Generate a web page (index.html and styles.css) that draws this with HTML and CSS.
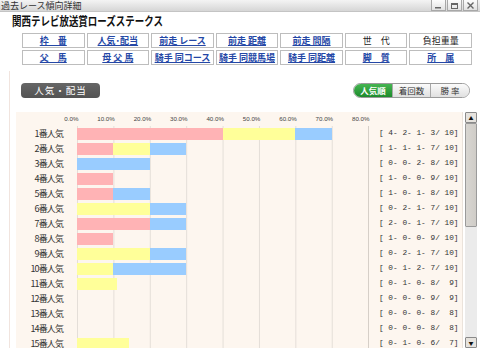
FILE: index.html
```html
<!DOCTYPE html>
<html lang="ja">
<head>
<meta charset="utf-8">
<title>過去レース傾向詳細</title>
<link rel="stylesheet" href="styles.css">
</head>
<body>
<div class="titlebar">
  <span class="tb-title">過去レース傾向詳細</span>
  <div class="tb-btns">
    <span class="tb-btn"><svg width="9" height="7" viewBox="0 0 9 7"><rect x="1" y="5" width="6" height="1.5" fill="#666"/></svg></span>
    <span class="tb-btn"><svg width="9" height="7" viewBox="0 0 9 7"><rect x="1.5" y="1.5" width="6" height="5" fill="none" stroke="#666"/><rect x="1.5" y="1.5" width="6" height="1.5" fill="#666"/></svg></span>
    <span class="tb-btn"><svg width="9" height="7" viewBox="0 0 9 7"><path d="M1.5 0.5 L7.5 6.5 M7.5 0.5 L1.5 6.5" stroke="#666" stroke-width="1.4"/></svg></span>
  </div>
</div>
<div class="race"><span class="race-name">関西テレビ放送賞ローズステークス</span></div>
<div class="nav">
  <a class="cell link">枠　番</a>
  <a class="cell link">人気･配当</a>
  <a class="cell link">前走 レース</a>
  <a class="cell link">前走 距離</a>
  <a class="cell link">前走 間隔</a>
  <span class="cell plain">世　代</span>
  <span class="cell plain">負担重量</span>
  <a class="cell link">父　馬</a>
  <a class="cell link">母 父 馬</a>
  <a class="cell link">騎手 同コース</a>
  <a class="cell link">騎手 同競馬場</a>
  <a class="cell link">騎手 同距離</a>
  <a class="cell link">脚　質</a>
  <a class="cell link">所　属</a>
</div>
<div class="main">
  <div class="section-head">
    <div class="pill">人気・配当</div>
    <div class="toggle">
      <span class="seg on">人気順</span>
      <span class="seg">着回数</span>
      <span class="seg">勝 率</span>
    </div>
  </div>
  <div class="chart-block">
    <div class="chart">
      <div class="axis">
        <span>0.0%</span><span>10.0%</span><span>20.0%</span><span>30.0%</span><span>40.0%</span><span>50.0%</span><span>60.0%</span><span>70.0%</span><span>80.0%</span>
      </div>
      <div class="row"><span class="lbl">1番人気</span><div class="plot"><div class="bar"><i class="p" style="width:50%"></i><i class="y" style="width:25%"></i><i class="b" style="width:12.5%"></i></div></div><span class="st">[ 4- 2- 1- 3/ 10]</span></div>
      <div class="row"><span class="lbl">2番人気</span><div class="plot"><div class="bar"><i class="p" style="width:12.5%"></i><i class="y" style="width:12.5%"></i><i class="b" style="width:12.5%"></i></div></div><span class="st">[ 1- 1- 1- 7/ 10]</span></div>
      <div class="row"><span class="lbl">3番人気</span><div class="plot"><div class="bar"><i class="b" style="width:25%"></i></div></div><span class="st">[ 0- 0- 2- 8/ 10]</span></div>
      <div class="row"><span class="lbl">4番人気</span><div class="plot"><div class="bar"><i class="p" style="width:12.5%"></i></div></div><span class="st">[ 1- 0- 0- 9/ 10]</span></div>
      <div class="row"><span class="lbl">5番人気</span><div class="plot"><div class="bar"><i class="p" style="width:12.5%"></i><i class="b" style="width:12.5%"></i></div></div><span class="st">[ 1- 0- 1- 8/ 10]</span></div>
      <div class="row"><span class="lbl">6番人気</span><div class="plot"><div class="bar"><i class="y" style="width:25%"></i><i class="b" style="width:12.5%"></i></div></div><span class="st">[ 0- 2- 1- 7/ 10]</span></div>
      <div class="row"><span class="lbl">7番人気</span><div class="plot"><div class="bar"><i class="p" style="width:25%"></i><i class="b" style="width:12.5%"></i></div></div><span class="st">[ 2- 0- 1- 7/ 10]</span></div>
      <div class="row"><span class="lbl">8番人気</span><div class="plot"><div class="bar"><i class="p" style="width:12.5%"></i></div></div><span class="st">[ 1- 0- 0- 9/ 10]</span></div>
      <div class="row"><span class="lbl">9番人気</span><div class="plot"><div class="bar"><i class="y" style="width:25%"></i><i class="b" style="width:12.5%"></i></div></div><span class="st">[ 0- 2- 1- 7/ 10]</span></div>
      <div class="row"><span class="lbl">10番人気</span><div class="plot"><div class="bar"><i class="y" style="width:12.5%"></i><i class="b" style="width:25%"></i></div></div><span class="st">[ 0- 1- 2- 7/ 10]</span></div>
      <div class="row"><span class="lbl">11番人気</span><div class="plot"><div class="bar"><i class="y" style="width:13.89%"></i></div></div><span class="st">[ 0- 1- 0- 8/  9]</span></div>
      <div class="row"><span class="lbl">12番人気</span><div class="plot"><div class="bar"></div></div><span class="st">[ 0- 0- 0- 9/  9]</span></div>
      <div class="row"><span class="lbl">13番人気</span><div class="plot"><div class="bar"></div></div><span class="st">[ 0- 0- 0- 8/  8]</span></div>
      <div class="row"><span class="lbl">14番人気</span><div class="plot"><div class="bar"></div></div><span class="st">[ 0- 0- 0- 8/  8]</span></div>
      <div class="row"><span class="lbl">15番人気</span><div class="plot"><div class="bar"><i class="y" style="width:17.86%"></i></div></div><span class="st">[ 0- 1- 0- 6/  7]</span></div>
    </div>
    <div class="scrollbar">
      <span class="sb-btn">▲</span>
      <span class="sb-thumb"></span>
      <span class="sb-track"></span>
      <span class="sb-btn">▼</span>
    </div>
  </div>
</div>
</body>
</html>
```
FILE: styles.css
```css
* { box-sizing: border-box; }
html, body { margin: 0; padding: 0; }
body {
  width: 480px;
  height: 349px;
  overflow: hidden;
  background: #fff;
  font-family: "Noto Sans CJK JP", "Noto Sans", sans-serif;
  color: #222;
}
.titlebar {
  height: 12px;
  display: flex;
  justify-content: space-between;
  align-items: flex-start;
  background: linear-gradient(#f4f4f4, #d6d6d6);
  border-bottom: 1px solid #c4c4c4;
}
.tb-title {
  font-size: 9px;
  line-height: 11px;
  padding-left: 1px;
  color: #333;
}
.tb-btns {
  display: flex;
  gap: 1px;
  padding-right: 2px;
}
.tb-btn {
  width: 15px;
  height: 11px;
  display: flex;
  align-items: center;
  justify-content: center;
  background: linear-gradient(#fdfdfd, #e2e2e2);
  border: 1px solid #a8a8a8;
  border-top: none;
}
.race {
  height: 15px;
  padding-left: 12px;
  line-height: 15px;
}
.race-name {
  display: inline-block;
  font-size: 12px;
  font-weight: bold;
  color: #111;
  transform: scaleX(0.79);
  transform-origin: left center;
  white-space: nowrap;
}
.nav {
  margin: 6px 0 0 22px;
  width: 450px;
  display: grid;
  grid-template-columns: repeat(7, 1fr);
  grid-auto-rows: 15px;
  gap: 2px 2px;
}
.cell {
  border: 1px solid #bdbdbd;
  background: #fff;
  font-size: 9px;
  line-height: 13px;
  text-align: center;
  white-space: nowrap;
}
.link {
  color: #2447a6;
  font-weight: bold;
  text-decoration: underline;
  text-underline-offset: 1px;
}
.plain {
  color: #222;
}
.main {
  margin: 6px 0 0 9px;
  border-left: 1px solid #f1e4de;
  padding-top: 12px;
}
.section-head {
  display: flex;
  justify-content: space-between;
  align-items: center;
  height: 15px;
  padding: 0 10px 0 11px;
}
.pill {
  width: 79px;
  height: 15px;
  border-radius: 4px;
  background: linear-gradient(#666, #535353);
  color: #fff;
  font-size: 9.5px;
  line-height: 15px;
  text-align: center;
  letter-spacing: 1px;
}
.toggle {
  display: flex;
  height: 15px;
  border: 1px solid #9a9a9a;
  border-radius: 8px;
  overflow: hidden;
}
.seg {
  height: 13px;
  font-size: 8.5px;
  line-height: 13px;
  text-align: center;
  color: #333;
  background: linear-gradient(#fbfbfb, #e0e0e0);
  border-left: 1px solid #a8a8a8;
  width: 38px;
}
.seg:last-child { width: 39px; }
.seg.on {
  border-left: none;
  width: 38px;
  background: linear-gradient(#45b551, #1d8b2c);
  color: #fff;
  font-weight: bold;
}
.chart-block {
  display: flex;
  margin: 14px 0 0 6px;
  height: 236px;
}
.chart {
  width: 447px;
  background: #fdf6ef;
  border-right: 1px solid #ebe3db;
  overflow: hidden;
}
.axis {
  display: flex;
  height: 14px;
  padding-left: 26px;
}
.axis span {
  flex: 0 0 36.4px;
  text-align: right;
  font-family: "Liberation Sans", sans-serif;
  font-size: 6.2px;
  line-height: 14px;
  color: #444;
}
.row {
  display: flex;
  height: 15px;
}
.lbl {
  width: 47px;
  margin-right: 14px;
  text-align: right;
  font-size: 9px;
  line-height: 15px;
  letter-spacing: -0.9px;
  color: #333;
  white-space: nowrap;
}
.plot {
  width: 292px;
  height: 15px;
  border-right: 1px solid #d6cfc8;
  background-image: linear-gradient(to right, #e4ded8 1px, transparent 1px);
  background-size: 36.4px 100%;
}
.bar {
  display: flex;
  height: 12px;
  margin-top: 2px;
}
.bar i { display: block; height: 12px; }
.p { background: #ffb3b5; }
.y { background: #ffff99; }
.b { background: #99ccff; }
.st {
  margin-left: 10px;
  font-family: "Liberation Mono", monospace;
  font-size: 7.8px;
  line-height: 15px;
  white-space: pre;
  color: #333;
}
.scrollbar {
  margin-left: 2px;
  width: 12px;
  display: flex;
  flex-direction: column;
}
.sb-btn {
  height: 11px;
  background: #e6e3de;
  border: 1px solid #8a8a8a;
  border-radius: 1px;
  font-size: 5px;
  line-height: 9px;
  text-align: center;
  color: #111;
}
.sb-thumb {
  height: 104px;
  background: linear-gradient(to right, #d8d6d2, #cfccc7);
  border: 1px solid #9a9a9a;
  border-radius: 1px;
}
.sb-track {
  flex: 1;
  background: #ebebeb;
}
```
